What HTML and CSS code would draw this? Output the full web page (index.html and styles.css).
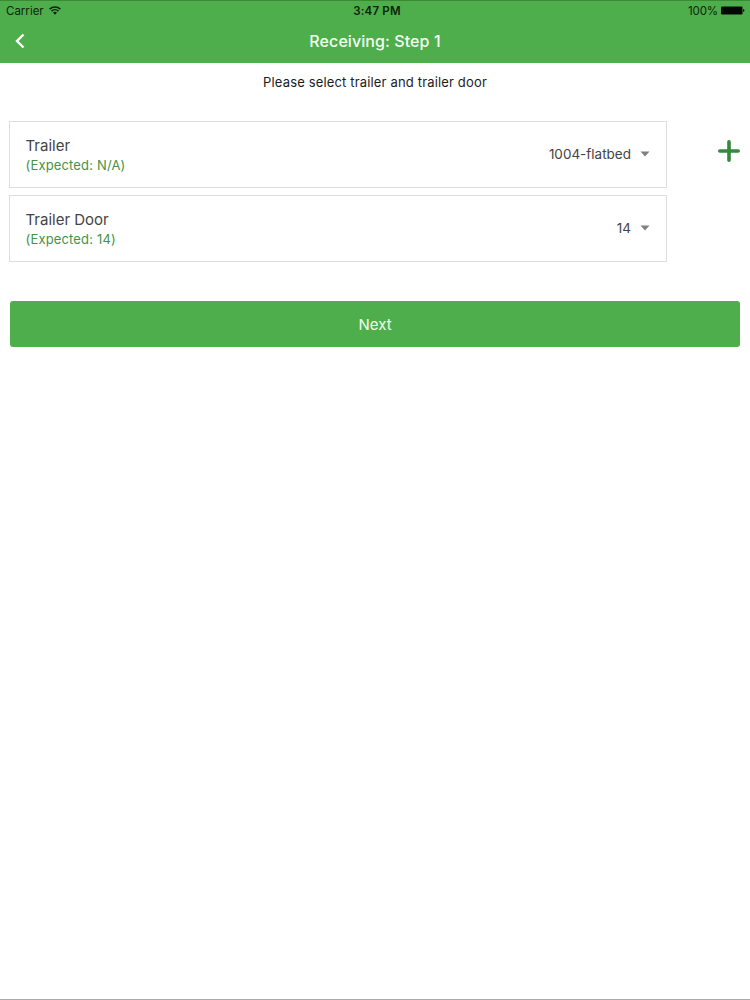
FILE: index.html
```html
<!DOCTYPE html>
<html lang="en">
<head>
<meta charset="utf-8">
<title>Receiving: Step 1</title>
<link rel="stylesheet" href="styles.css">
</head>
<body>
<header class="header">
  <div class="status">
    <div class="carrier"><span>Carrier</span>
      <svg class="wifi" viewBox="0 0 12 9"><path d="M.6 3.100a7.800 7.800 0 0 1 10.800 0M2.500 5.100a5 5 0 0 1 7 0" fill="none" stroke="#0b250b" stroke-width="1.500"/><path d="M4 6.600a3 3 0 0 1 4 0L6 8.800z" fill="#0b250b"/></svg>
    </div>
    <div class="clock">3:47 PM</div>
    <div class="power"><span>100%</span>
      <svg class="battery" viewBox="0 0 24 9"><rect x="0" y=".5" width="21.500" height="8" rx="1.200"/><path d="M22 3q3 1.500 0 3z"/></svg>
    </div>
  </div>
  <div class="nav">
    <svg class="back" viewBox="0 0 10 16"><path d="M8.500 1.500 2 8l6.500 6.500" fill="none" stroke="#fff" stroke-width="2.400"/></svg>
    <h1 class="title">Receiving: Step 1</h1>
  </div>
</header>
<main class="main">
  <p class="hint">Please select trailer and trailer door</p>
  <div class="form">
    <div class="fields">
      <div class="field">
        <div class="label"><div class="name">Trailer</div><div class="expected">(Expected: N/A)</div></div>
        <div class="value"><span>1004-flatbed</span><svg class="caret" viewBox="0 0 10 6"><path d="M.5 .5h9L5 5.500z"/></svg></div>
      </div>
      <div class="field">
        <div class="label"><div class="name">Trailer Door</div><div class="expected">(Expected: 14)</div></div>
        <div class="value"><span>14</span><svg class="caret" viewBox="0 0 10 6"><path d="M.5 .5h9L5 5.500z"/></svg></div>
      </div>
    </div>
    <svg class="plus" viewBox="0 0 22 22"><path d="M11 1.800v18.400M1.800 11h18.400" stroke="#34893a" stroke-width="3.600" stroke-linecap="round"/></svg>
  </div>
  <button class="next">Next</button>
</main>
</body>
</html>
```
FILE: styles.css
```css
* { box-sizing: border-box; }
body { margin: 0; height: 1000px; background: #fff; color: #1c1c1c; font-family: Inter, "Liberation Sans", sans-serif; display: flex; flex-direction: column; border-bottom: 1px solid #aaa; }
.header { height: 63px; background: #4fae4c; border-top: 1px solid #3a8a35; }
.status { height: 19px; padding: 0 5px 0 6px; display: grid; grid-template-columns: 1fr auto 1fr; align-items: center; font-size: 11.5px; color: #0b250b; }
.carrier, .power { display: flex; align-items: center; gap: 5px; }
.power { justify-content: flex-end; gap: 3px; letter-spacing: -0.1px; }
.clock { font-weight: 600; font-size: 11.5px; letter-spacing: 0.2px; padding-left: 3px; }
.wifi { width: 12px; height: 9px; }
.battery { width: 24px; height: 9px; fill: #020802; }
.nav { height: 41px; padding: 0 15px; display: grid; grid-template-columns: 10px 1fr 10px; align-items: center; }
.back { width: 10px; height: 16px; }
.title { margin: 0; text-align: center; font-size: 16px; font-weight: 450; letter-spacing: 0.08px; color: #f4fff2; }
.main { padding: 10px 9px 0; }
.hint { margin: 0; text-align: center; font-size: 13px; line-height: 18px; letter-spacing: 0.16px; }
.form { margin-top: 30px; display: flex; justify-content: space-between; }
.fields { width: 658px; display: grid; gap: 7px; }
.field { height: 67px; padding: 1px 16px 0; border: 1px solid #dedede; display: flex; align-items: center; justify-content: space-between; }
.label { margin-left: -0.5px; }
.name { font-size: 15px; line-height: 20px; color: #444; }
.expected { font-size: 13px; line-height: 18px; letter-spacing: 0.16px; color: #46924a; }
.value { display: flex; align-items: center; gap: 9px; padding-bottom: 2px; font-size: 13.5px; color: #444; }
.caret { width: 10px; height: 6px; fill: #808080; }
.plus { width: 22px; height: 22px; margin: 19px 1px 0 0; }
.next { display: block; width: 730px; height: 46px; margin: 39px 0 0 1px; padding: 0; border: 0; border-radius: 3px; background: #4fae4c; color: #edffea; font: 15px Inter, "Liberation Sans", sans-serif; }
```
